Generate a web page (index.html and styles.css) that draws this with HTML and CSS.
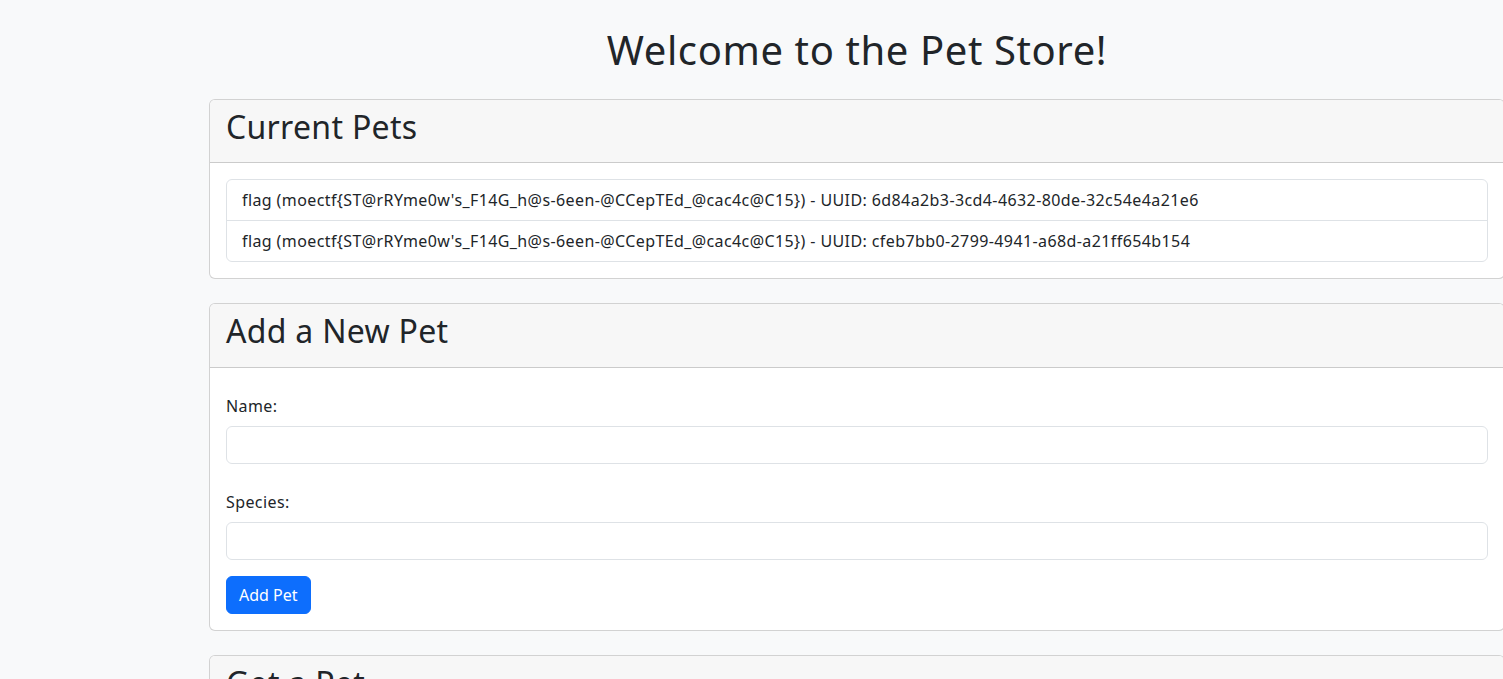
FILE: index.html
```html
<!DOCTYPE html>
<html lang="en">
<head>
<meta charset="utf-8">
<title>Pet Store</title>
<link rel="stylesheet" href="styles.css">
</head>
<body>
<div class="container">
  <h1 class="title">Welcome to the Pet Store!</h1>

  <section class="card">
    <header class="card-header"><h2>Current Pets</h2></header>
    <div class="card-body">
      <ul class="list-group">
        <li class="list-item">flag (moectf{ST@rRYme0w's_F14G_h@s-6een-@CCepTEd_@cac4c@C15}) - UUID: 6d84a2b3-3cd4-4632-80de-32c54e4a21e6</li>
        <li class="list-item">flag (moectf{ST@rRYme0w's_F14G_h@s-6een-@CCepTEd_@cac4c@C15}) - UUID: cfeb7bb0-2799-4941-a68d-a21ff654b154</li>
      </ul>
    </div>
  </section>

  <section class="card">
    <header class="card-header"><h2>Add a New Pet</h2></header>
    <div class="card-body">
      <form class="pet-form">
        <div class="field">
          <label class="field-label" for="name">Name:</label>
          <input class="field-input" id="name" type="text">
        </div>
        <div class="field field-last">
          <label class="field-label" for="species">Species:</label>
          <input class="field-input" id="species" type="text">
        </div>
        <button class="btn-primary" type="button">Add Pet</button>
      </form>
    </div>
  </section>

  <section class="card">
    <header class="card-header"><h2>Get a Pet</h2></header>
    <div class="card-body">
      <form class="pet-form">
        <div class="field">
          <label class="field-label" for="uuid">UUID:</label>
          <input class="field-input" id="uuid" type="text">
        </div>
      </form>
    </div>
  </section>
</div>
</body>
</html>
```
FILE: styles.css
```css
html {
  overflow-x: hidden;
}

body {
  margin: 0;
  background: #f8f9fa;
  color: #212529;
  font-family: "Noto Sans", "Open Sans", sans-serif;
  font-size: 16px;
  line-height: 1.5;
  letter-spacing: 0.4px;
}

.container {
  width: 1296px;
  margin-left: 209px;
}

.title {
  margin: 26px 0 25px;
  font-size: 40px;
  font-weight: 400;
  line-height: 48px;
  text-align: center;
  letter-spacing: 0.6px;
}

.card {
  background: #fff;
  border: 1px solid rgba(0, 0, 0, 0.175);
  border-radius: 6px;
  margin-bottom: 24px;
  overflow: hidden;
}

.card-header {
  background: #f7f7f7;
  border-bottom: 1px solid rgba(0, 0, 0, 0.175);
  padding: 8px 16px;
}

.card-header h2 {
  margin: 0 0 8px;
  font-size: 32px;
  font-weight: 400;
  line-height: 38.4px;
  letter-spacing: 0.3px;
}

.card-body {
  padding: 16px;
}

.list-group {
  list-style: none;
  margin: 0;
  padding: 0;
  border: 1px solid #dee2e6;
  border-radius: 6px;
}

.list-item {
  padding: 8px 15px;
  line-height: 24px;
}

.list-item + .list-item {
  border-top: 1px solid #dee2e6;
}

.pet-form {
  padding-top: 10px;
}

.field {
  margin-bottom: 26px;
}

.field-last {
  margin-bottom: 16px;
}

.field-label {
  display: block;
  margin-bottom: 8px;
  line-height: 24px;
}

.field-input {
  display: block;
  box-sizing: border-box;
  width: 100%;
  height: 38px;
  border: 1px solid #dee2e6;
  border-radius: 6px;
  background: #fff;
  font: inherit;
  padding: 6px 12px;
}

.btn-primary {
  display: block;
  box-sizing: border-box;
  height: 38px;
  padding: 0 12px;
  border: 1px solid #0d6efd;
  border-radius: 6px;
  background: #0d6efd;
  color: #fff;
  font: inherit;
  cursor: pointer;
}
```
